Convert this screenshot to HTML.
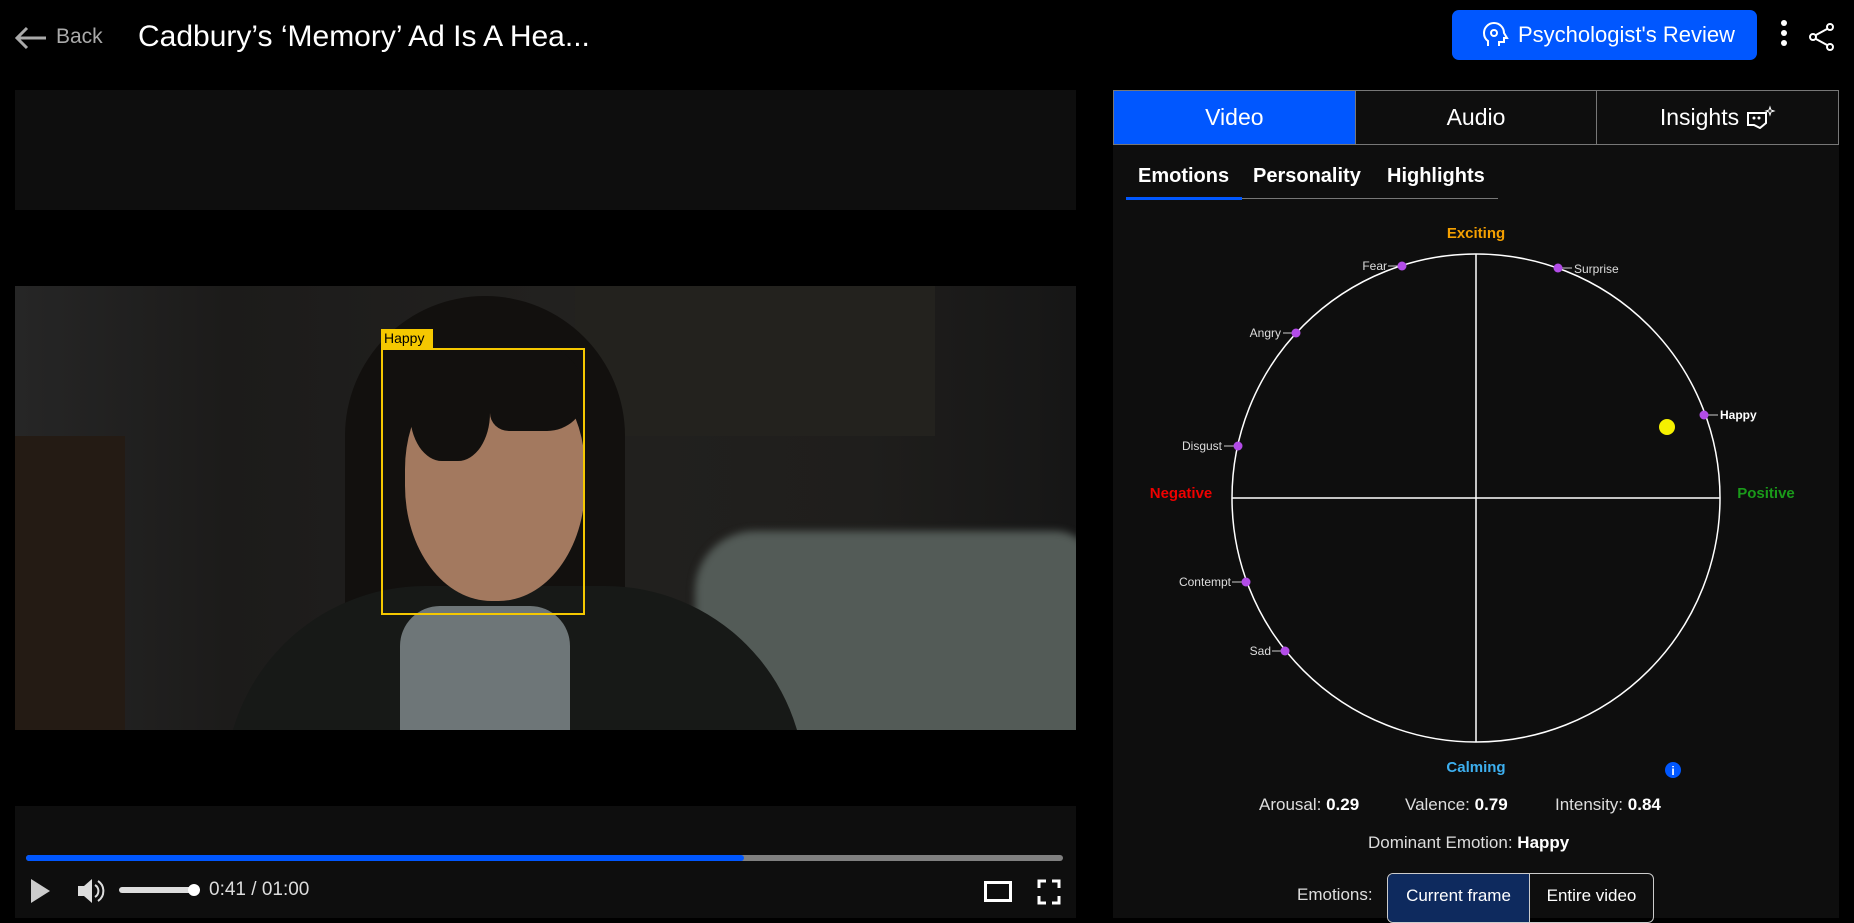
<!DOCTYPE html>
<html><head><meta charset="utf-8"><style>
*{margin:0;padding:0;box-sizing:border-box}
body{width:1854px;height:918px;background:#000;overflow:hidden;font-family:"Liberation Sans",sans-serif;color:#fff;position:relative}
.a{position:absolute}
</style></head><body>
<!-- header -->
<svg class="a" style="left:14px;top:26px" width="34" height="24" viewBox="0 0 34 24"><path d="M32 12H3M13 2L3 12l10 10" stroke="#aaa" stroke-width="3" fill="none"/></svg>
<div class="a" style="left:56px;top:25px;font-size:21px;color:#aaa">Back</div>
<div class="a" style="left:138px;top:20px;font-size:30px;color:#fff">Cadbury’s ‘Memory’ Ad Is A Hea...</div>
<div class="a" style="left:1452px;top:10px;width:305px;height:50px;background:#0057ff;border-radius:7px;font-size:22px;line-height:50px;padding-left:66px">Psychologist's Review</div>
<svg class="a" style="left:1480px;top:20px" width="30" height="30" viewBox="0 0 30 30"><path d="M8 26v-5c-3-2-4-5-4-8a10 10 0 0 1 20 0l3 5h-3v4h-5v4" stroke="#fff" stroke-width="2" fill="none"/><circle cx="14" cy="13" r="3" stroke="#fff" stroke-width="2" fill="none"/></svg>
<div class="a" style="left:1781px;top:20px;width:6px;height:6px;border-radius:3px;background:#fff;box-shadow:0 10px 0 #fff,0 20px 0 #fff"></div>
<svg class="a" style="left:1808px;top:22px" width="28" height="30" viewBox="0 0 28 30"><circle cx="22" cy="5" r="3" stroke="#fff" stroke-width="2" fill="none"/><circle cx="5" cy="15" r="3" stroke="#fff" stroke-width="2" fill="none"/><circle cx="22" cy="25" r="3" stroke="#fff" stroke-width="2" fill="none"/><path d="M8 13l11-6M8 17l11 6" stroke="#fff" stroke-width="2"/></svg>

<!-- left -->
<div class="a" style="left:15px;top:90px;width:1061px;height:120px;background:#0e0e0e"></div>
<div class="a" style="left:15px;top:286px;width:1061px;height:444px;overflow:hidden;background:linear-gradient(90deg,#262626 0%,#1c1b1a 20%,#22211f 50%,#1f1e1c 80%,#161616 100%)">
 <div class="a" style="left:560px;top:0;width:360px;height:150px;background:#23221e"></div>
 <div class="a" style="left:0;top:150px;width:110px;height:300px;background:#241b14"></div>
 <div class="a" style="left:680px;top:245px;width:400px;height:220px;background:#535b57;border-radius:60px 40px 0 0;filter:blur(4px)"></div>
 <div class="a" style="left:330px;top:10px;width:280px;height:400px;background:#12100e;border-radius:140px 140px 40px 40px"></div>
 <div class="a" style="left:210px;top:300px;width:580px;height:200px;background:#171917;border-radius:200px 200px 0 0"></div>
 <div class="a" style="left:385px;top:320px;width:170px;height:160px;background:#6e7678;border-radius:40px 40px 0 0"></div>
 <div class="a" style="left:390px;top:75px;width:180px;height:240px;background:#a3795f;border-radius:45% 45% 48% 48%"></div>
 <div class="a" style="left:395px;top:55px;width:80px;height:120px;background:#12100e;border-radius:60% 10% 40% 40%"></div>
 <div class="a" style="left:475px;top:55px;width:95px;height:90px;background:#12100e;border-radius:10% 60% 40% 20%"></div>
</div>
<div class="a" style="left:381px;top:348px;width:204px;height:267px;border:2px solid #f5c800"></div>
<div class="a" style="left:381px;top:329px;width:52px;height:19px;background:#f5c800;color:#000;font-size:14px;line-height:19px;padding-left:3px">Happy</div>
<div class="a" style="left:15px;top:806px;width:1061px;height:112px;background:#0e0e0e"></div>
<div class="a" style="left:26px;top:855px;width:1037px;height:6px;background:#808080;border-radius:3px"></div>
<div class="a" style="left:26px;top:855px;width:718px;height:6px;background:#0057ff;border-radius:3px"></div>
<svg class="a" style="left:30px;top:878px" width="22" height="26"><path d="M1 1L20 13 1 25z" fill="#ccc"/></svg>
<svg class="a" style="left:76px;top:877px" width="30" height="28" viewBox="0 0 30 28"><path d="M2 9h6l8-7v24l-8-7H2z" fill="#ddd"/><path d="M19 8a7 7 0 0 1 0 12M22 4a12 12 0 0 1 0 20" stroke="#ddd" stroke-width="2" fill="none"/></svg>
<div class="a" style="left:119px;top:887px;width:76px;height:6px;background:#ddd;border-radius:3px"></div>
<div class="a" style="left:188px;top:884px;width:12px;height:12px;background:#fff;border-radius:6px"></div>
<div class="a" style="left:209px;top:879px;font-size:19px;color:#ddd">0:41 / 01:00</div>
<div class="a" style="left:984px;top:881px;width:28px;height:21px;border:3px solid #fff"></div>
<svg class="a" style="left:1037px;top:879px" width="24" height="26"><path d="M2 9V2h7M15 2h7v7M22 17v7h-7M9 24H2v-7" stroke="#fff" stroke-width="3" fill="none"/></svg>

<!-- right panel -->
<div class="a" style="left:1113px;top:90px;width:726px;height:828px;background:#0e0e0e"></div>
<div class="a" style="left:1113px;top:90px;width:726px;height:55px;border:1px solid #777;display:flex">
 <div style="flex:1;background:#0057ff;text-align:center;line-height:53px;font-size:23px;border-right:1px solid #777">Video</div>
 <div style="flex:1;text-align:center;line-height:53px;font-size:23px;border-right:1px solid #777">Audio</div>
 <div style="flex:1;text-align:center;line-height:53px;font-size:23px">Insights <svg width="30" height="24" viewBox="0 0 30 24" style="vertical-align:-4px"><path d="M2 8h18v10l-6 5-6-3H2z" stroke="#fff" stroke-width="2" fill="none"/><circle cx="8" cy="13" r="1.5" fill="#fff"/><circle cx="13" cy="13" r="1.5" fill="#fff"/><path d="M24 2l1 3 3 1-3 1-1 3-1-3-3-1 3-1z" stroke="#fff" stroke-width="1" fill="none"/></svg></div>
</div>
<div class="a" style="left:1138px;top:165px;font-size:20px;font-weight:bold">Emotions</div>
<div class="a" style="left:1253px;top:165px;font-size:20px;font-weight:bold">Personality</div>
<div class="a" style="left:1387px;top:165px;font-size:20px;font-weight:bold">Highlights</div>
<div class="a" style="left:1126px;top:198px;width:372px;height:1px;background:#777"></div>
<div class="a" style="left:1126px;top:197px;width:116px;height:3px;background:#0057ff"></div>

<svg class="a" style="left:1113px;top:210px" width="726" height="580" font-family="Liberation Sans,sans-serif">
 <g transform="translate(-1113,-210)">
 <circle cx="1476" cy="498" r="244" stroke="#fff" stroke-width="1.5" fill="none"/>
 <path d="M1476 254V742M1232 498H1720" stroke="#fff" stroke-width="1.5"/>
 <text x="1476" y="238" fill="#f5a000" font-size="15" font-weight="bold" text-anchor="middle">Exciting</text>
 <text x="1476" y="772" fill="#3db0f0" font-size="15" font-weight="bold" text-anchor="middle">Calming</text>
 <text x="1181" y="498" fill="#e00" font-size="15" font-weight="bold" text-anchor="middle">Negative</text>
 <text x="1766" y="498" fill="#1a9a1a" font-size="15" font-weight="bold" text-anchor="middle">Positive</text>
 <g fill="#b34ce8" stroke="#ccc" font-size="12">
  <path d="M1388 266h14M1558 268h14M1283 333h13M1704 415h14M1224 446h14M1232 582h14M1272 651h13" stroke-width="1"/>
  <circle cx="1402" cy="266" r="4.5" stroke="none"/><circle cx="1558" cy="268" r="4.5" stroke="none"/>
  <circle cx="1296" cy="333" r="4.5" stroke="none"/><circle cx="1704" cy="415" r="4.5" stroke="none"/>
  <circle cx="1238" cy="446" r="4.5" stroke="none"/><circle cx="1246" cy="582" r="4.5" stroke="none"/>
  <circle cx="1285" cy="651" r="4.5" stroke="none"/>
 </g>
 <g fill="#ddd" font-size="12" stroke="none">
  <text x="1387" y="270" text-anchor="end">Fear</text>
  <text x="1574" y="273">Surprise</text>
  <text x="1281" y="337" text-anchor="end">Angry</text>
  <text x="1720" y="419" fill="#fff" font-weight="bold">Happy</text>
  <text x="1222" y="450" text-anchor="end">Disgust</text>
  <text x="1231" y="586" text-anchor="end">Contempt</text>
  <text x="1271" y="655" text-anchor="end">Sad</text>
 </g>
 <circle cx="1667" cy="427" r="8" fill="#f5f000"/>
 <circle cx="1673" cy="770" r="8" fill="#0057ff"/>
 <text x="1673" y="775" fill="#fff" font-size="12" font-weight="bold" text-anchor="middle">i</text>
 </g>
</svg>
<div class="a" style="left:1259px;top:795px;font-size:17px;color:#ddd">Arousal: <b style="color:#fff">0.29</b></div>
<div class="a" style="left:1405px;top:795px;font-size:17px;color:#ddd">Valence: <b style="color:#fff">0.79</b></div>
<div class="a" style="left:1555px;top:795px;font-size:17px;color:#ddd">Intensity: <b style="color:#fff">0.84</b></div>
<div class="a" style="left:1368px;top:833px;font-size:17px;color:#ddd">Dominant Emotion: <b style="color:#fff">Happy</b></div>
<div class="a" style="left:1297px;top:885px;font-size:17px;color:#ddd">Emotions:</div>
<div class="a" style="left:1387px;top:873px;width:267px;height:50px;border:1px solid #ccc;border-radius:6px;display:flex;overflow:hidden;font-size:17px">
 <div style="width:142px;background:#0e2a5e;text-align:center;line-height:44px;border-right:1px solid #ccc">Current frame</div>
 <div style="flex:1;text-align:center;line-height:44px">Entire video</div>
</div>
</body></html>
